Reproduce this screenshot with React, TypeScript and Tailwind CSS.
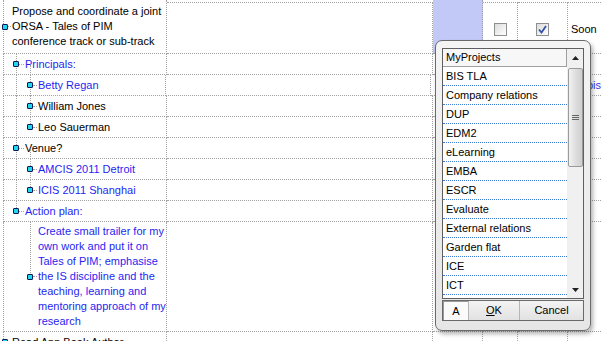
import React from "react";

type Item = {
  level: 0 | 1 | 2;
  lines: string[];
  blue?: boolean;
  h: string;
  // tree connectors drawn in this row
  tree?: { x: string; span: "full" | "top" | "bottom" }[];
};

const ROWS: Item[] = [
  {
    level: 1,
    lines: ["Principals:"],
    blue: true,
    h: "h-[21px]",
    tree: [{ x: "left-[16px]", span: "full" }, { x: "left-[30px]", span: "bottom" }],
  },
  { level: 2, lines: ["Betty Regan"], blue: true, h: "h-[21px]", tree: [{ x: "left-[16px]", span: "full" }, { x: "left-[30px]", span: "full" }] },
  { level: 2, lines: ["William Jones"], h: "h-[21px]", tree: [{ x: "left-[16px]", span: "full" }, { x: "left-[30px]", span: "full" }] },
  { level: 2, lines: ["Leo Sauerman"], h: "h-[21px]", tree: [{ x: "left-[16px]", span: "full" }, { x: "left-[30px]", span: "top" }] },
  { level: 1, lines: ["Venue?"], h: "h-[21px]", tree: [{ x: "left-[16px]", span: "full" }, { x: "left-[30px]", span: "bottom" }] },
  { level: 2, lines: ["AMCIS 2011 Detroit"], blue: true, h: "h-[21px]", tree: [{ x: "left-[16px]", span: "full" }, { x: "left-[30px]", span: "full" }] },
  { level: 2, lines: ["ICIS 2011 Shanghai"], blue: true, h: "h-[21px]", tree: [{ x: "left-[16px]", span: "full" }, { x: "left-[30px]", span: "top" }] },
  { level: 1, lines: ["Action plan:"], blue: true, h: "h-[21px]", tree: [{ x: "left-[16px]", span: "top" }] },
  {
    level: 2,
    lines: [
      "Create small trailer for my",
      "own work and put it on",
      "Tales of PIM; emphasise",
      "the IS discipline and the",
      "teaching, learning and",
      "mentoring approach of my",
      "research",
    ],
    blue: true,
    h: "h-[110px]",
    tree: [{ x: "left-[30px]", span: "top" }],
  },
  { level: 0, lines: ["Read Ann Book Author"], h: "h-[21px]" },
];

const PROJECTS = [
  "BIS TLA",
  "Company relations",
  "DUP",
  "EDM2",
  "eLearning",
  "EMBA",
  "ESCR",
  "Evaluate",
  "External relations",
  "Garden flat",
  "ICE",
  "ICT",
  "Innovation",
];

const dot = "border-dotted border-[#a3a3a3]";

function Bullet({ className = "" }: { className?: string }) {
  return (
    <span
      className={`relative block w-[6px] h-[6px] shrink-0 rounded-[1px] border border-[#0b1a55] bg-[#22d6ee] ${className}`}
    />
  );
}

function TreeLine({ x, span }: { x: string; span: "full" | "top" | "bottom" }) {
  const pos = span === "full" ? "top-0 bottom-0" : span === "top" ? "top-0 h-1/2" : "top-1/2 bottom-0";
  return <span className={`absolute ${x} ${pos} border-l ${dot}`} />;
}

function Outline({ item }: { item: Item }) {
  const pad = item.level === 0 ? "" : item.level === 1 ? "pl-[9px]" : "pl-[23px]";
  const conn = item.level === 0 ? "w-[3px]" : item.level === 1 ? "w-[5px]" : "w-[4px]";
  return (
    <div className={`flex items-center ${pad}`}>
      <Bullet className={item.level === 0 ? "-ml-[2px]" : ""} />
      <span className={`${conn} mr-[1px] self-center border-t ${dot}`} />
      <div className={`leading-[15px] ${item.blue ? "text-[#1f1ff2]" : "text-black"}`}>
        {item.lines.map((l) => (
          <div key={l} className="whitespace-nowrap">
            {l}
          </div>
        ))}
      </div>
    </div>
  );
}

function Checkbox({ checked }: { checked?: boolean }) {
  return (
    <span className="w-[13px] h-[13px] border border-[#8e8f8f] bg-gradient-to-br from-[#dcdcdc] to-white flex items-center justify-center">
      {checked && (
        <svg width="9" height="9" viewBox="0 0 9 9">
          <path d="M1 4.5 L3.5 7.5 L8 1" fill="none" stroke="#3550a8" strokeWidth="1.8" />
        </svg>
      )}
    </span>
  );
}

function ProjectPicker() {
  return (
    <div className="absolute left-[435px] top-[40px] w-[156px] h-[291px] rounded-[7px] border border-[#6a6a6a] bg-gradient-to-b from-[#f4f4f4] to-[#e6e6e6] pt-[7px] pl-[6px] pr-[6px] pb-[9px] flex flex-col shadow-[2px_3px_4px_rgba(0,0,0,0.3)]">
      <div className="h-[252px] border border-[#5f5f5f] bg-white flex overflow-hidden">
        <div className="w-[124px] flex flex-col overflow-hidden">
          <div className="h-[18px] shrink-0 border-b border-r border-[#a0a0a0] bg-[#f7f7f7] px-[3px] flex items-center">
            MyProjects
          </div>
          {PROJECTS.map((p) => (
            <div
              key={p}
              className="h-[19px] shrink-0 border-b border-dotted border-[#3d7fd8] px-[3px] flex items-center whitespace-nowrap"
            >
              {p}
            </div>
          ))}
        </div>
        <div className="w-[16px] bg-[#f0f0f0] flex flex-col items-center">
          <div className="h-[17px] flex items-center justify-center">
            <svg width="7" height="4" viewBox="0 0 7 4">
              <path d="M0 4 L3.5 0 L7 4 Z" fill="#222" />
            </svg>
          </div>
          <div className="mt-[2px] w-[15px] h-[99px] rounded-[2px] border border-[#9a9a9a] bg-gradient-to-r from-[#f2f2f2] via-[#dedede] to-[#cfcfcf] flex flex-col items-center justify-center gap-[1px]">
            <span className="w-[7px] border-t border-[#666]" />
            <span className="w-[7px] border-t border-[#666]" />
            <span className="w-[7px] border-t border-[#666]" />
          </div>
          <div className="flex-1" />
          <div className="h-[17px] flex items-center justify-center">
            <svg width="7" height="4" viewBox="0 0 7 4">
              <path d="M0 0 L3.5 4 L7 0 Z" fill="#222" />
            </svg>
          </div>
        </div>
      </div>
      <div className="mt-[1px] h-[21px] flex border border-[#6a6a6a] bg-[#e9e9e9] leading-none">
        <div className="w-[25px] flex items-center justify-center bg-[#fbfbfb] border-t border-l border-[#9a9a9a]">A</div>
        <div className="w-[51px] flex items-center justify-center border-l border-[#b5b5b5] bg-gradient-to-b from-[#f3f3f3] to-[#e2e2e2]">
          <span className="underline decoration-1 underline-offset-1">O</span>
          <span>K</span>
        </div>
        <div className="flex-1 flex items-center justify-center border-l border-[#b5b5b5] bg-gradient-to-b from-[#f3f3f3] to-[#e2e2e2]">
          Cancel
        </div>
      </div>
    </div>
  );
}

export default function App() {
  return (
    <div className="relative w-[601px] h-[341px] overflow-hidden bg-white font-['Liberation_Sans',Arial,sans-serif] text-[11px] text-black">
      {/* first task row */}
      <div className="flex h-[54px]">
        <div className={`ml-[3px] w-[164px] border-l border-r border-b ${dot} flex items-center`}>
          <Bullet className="-ml-[2px]" />
          <span className={`w-[3px] mr-[1px] border-t ${dot}`} />
          <div className="leading-[15px] whitespace-nowrap">
            Propose and coordinate a joint
            <br />
            ORSA - Tales of PIM
            <br />
            conference track or sub-track
          </div>
        </div>
        <div className={`mt-[2px] w-[266px] border-t border-r border-b ${dot}`} />
        <div className={`w-[50px] border-r border-b ${dot} bg-[#c3c9f7]`} />
        <div className={`mt-[2px] w-[35px] border-t border-r border-b ${dot} flex items-center justify-center pl-[1px] pt-[2px]`}>
          <Checkbox />
        </div>
        <div className={`mt-[2px] w-[50px] border-t border-r border-b ${dot} flex items-center justify-center pt-[2px]`}>
          <Checkbox checked />
        </div>
        <div className={`mt-[2px] flex-1 border-t border-b ${dot} flex items-center pl-[3px] pt-[2px]`}>Soon</div>
      </div>

      {ROWS.map((r, i) => (
        <div key={i} className={`relative flex ${r.h}`}>
          {r.tree?.map((t, j) => (
            <TreeLine key={j} x={t.x} span={t.span} />
          ))}
          <div className={`ml-[3px] w-[164px] border-l border-r border-b ${dot} flex items-center`}>
            <Outline item={r} />
          </div>
          <div className={`w-[266px] border-r border-b ${dot}`} />
          <div className={`w-[50px] border-r border-b ${dot}`} />
          <div className={`w-[35px] border-r border-b ${dot}`} />
          <div className={`w-[50px] border-r border-b ${dot}`} />
          <div className={`flex-1 border-b ${dot} flex items-center pl-[21px] text-[#3a2ee8]`}>
            {i === 1 ? "bis" : null}
          </div>
        </div>
      ))}

      <ProjectPicker />
    </div>
  );
}
